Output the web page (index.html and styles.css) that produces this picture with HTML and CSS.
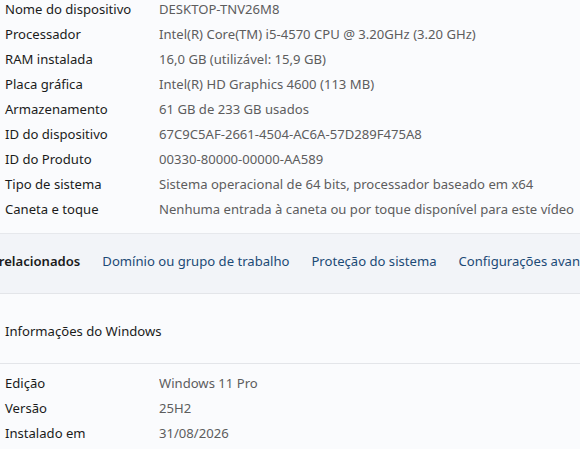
FILE: index.html
```html
<!DOCTYPE html>
<html lang="pt">
<head>
<meta charset="utf-8">
<link rel="stylesheet" href="styles.css">
</head>
<body>
<div class="page">
  <section class="specs">
    <div class="row"><span class="label">Nome do dispositivo</span><span class="value">DESKTOP-TNV26M8</span></div>
    <div class="row"><span class="label">Processador</span><span class="value">Intel(R) Core(TM) i5-4570 CPU @ 3.20GHz (3.20 GHz)</span></div>
    <div class="row"><span class="label">RAM instalada</span><span class="value">16,0 GB (utilizável: 15,9 GB)</span></div>
    <div class="row"><span class="label">Placa gráfica</span><span class="value">Intel(R) HD Graphics 4600 (113 MB)</span></div>
    <div class="row"><span class="label">Armazenamento</span><span class="value">61 GB de 233 GB usados</span></div>
    <div class="row"><span class="label">ID do dispositivo</span><span class="value">67C9C5AF-2661-4504-AC6A-57D289F475A8</span></div>
    <div class="row"><span class="label">ID do Produto</span><span class="value">00330-80000-00000-AA589</span></div>
    <div class="row"><span class="label">Tipo de sistema</span><span class="value">Sistema operacional de 64 bits, processador baseado em x64</span></div>
    <div class="row"><span class="label">Caneta e toque</span><span class="value">Nenhuma entrada à caneta ou por toque disponível para este vídeo</span></div>
  </section>

  <nav class="related">
    <div class="related-inner">
      <span class="related-title">Links relacionados</span>
      <a class="link" href="#">Domínio ou grupo de trabalho</a>
      <a class="link" href="#">Proteção do sistema</a>
      <a class="link" href="#">Configurações avançadas do sistema</a>
    </div>
  </nav>

  <section class="windows">
    <header class="win-head">Informações do Windows</header>
    <div class="specs">
      <div class="row"><span class="label">Edição</span><span class="value">Windows 11 Pro</span></div>
      <div class="row"><span class="label">Versão</span><span class="value">25H2</span></div>
      <div class="row"><span class="label">Instalado em</span><span class="value">31/08/2026</span></div>
    </div>
  </section>
</div>
</body>
</html>
```
FILE: styles.css
```css
html, body {
  margin: 0;
  padding: 0;
  background: #fafbfd;
  overflow: hidden;
}
body {
  width: 580px;
  height: 449px;
  font-family: "Noto Sans", "Open Sans", sans-serif;
  font-size: 13.1px;
  color: #1b1b1b;
}
.page {
  margin-top: -4px;
}
.specs {
  display: flex;
  flex-direction: column;
}
.row {
  display: grid;
  grid-template-columns: 154px 1fr;
  height: 25px;
  align-items: center;
  padding-left: 5px;
  white-space: nowrap;
}
.label {
  color: #1b1b1b;
}
.value {
  color: #5d5d5d;
  overflow: hidden;
}
.related {
  margin-top: 12px;
  height: 59px;
  box-sizing: border-box;
  height: 61px;
  padding-bottom: 5px;
  background: #f2f4f8;
  border-top: 1px solid #e6e8ec;
  border-bottom: 1px solid #e3e5e9;
  display: flex;
  align-items: center;
  overflow: hidden;
}
.related-inner {
  display: flex;
  align-items: center;
  gap: 22px;
  margin-left: -38px;
  white-space: nowrap;
}
.related-title {
  font-weight: 600;
  color: #1b1b1b;
}
.link {
  color: #1c4a76;
  text-decoration: none;
}
.windows {
  display: flex;
  flex-direction: column;
}
.win-head {
  height: 65px;
  display: flex;
  align-items: center;
  padding-top: 4px;
  padding-left: 5px;
  border-bottom: 1px solid #e3e5e9;
  color: #1b1b1b;
}
.windows .specs {
  padding-top: 6px;
}
```
